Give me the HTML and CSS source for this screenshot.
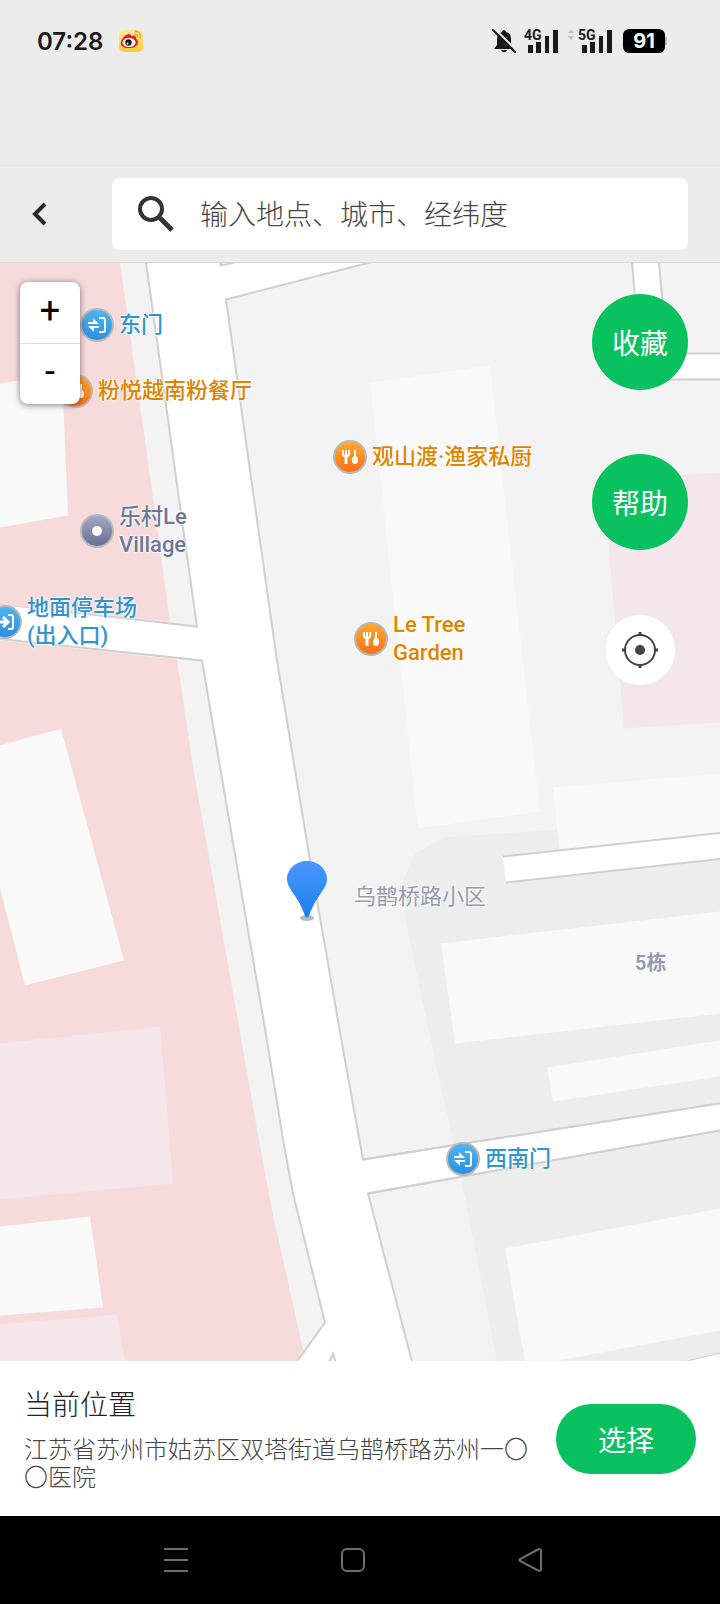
FILE: index.html
```
<!DOCTYPE html>
<html lang="zh-CN">
<head>
    <meta charset="UTF-8">
    <meta name="viewport" content="width=device-width, initial-scale=1.0">
    <title>选择位置</title>
    <link rel="stylesheet" href="styles.css">
</head>
<body>

    <!-- Phone status bar -->
    <div class="status-bar">
        <div class="status-row">
            <span class="clock">07:28</span>
            <svg class="weibo" width="26" height="24" viewBox="0 0 26 24">
                <defs>
                    <linearGradient id="weiboBg" x1="0" y1="0" x2="0" y2="1">
                        <stop offset="0" stop-color="#fbe9a4"/>
                        <stop offset="1" stop-color="#fbcb34"/>
                    </linearGradient>
                </defs>
                <rect x="1" y="1" width="24" height="22" rx="5" fill="url(#weiboBg)"/>
                <path d="M3 13c1-4 5-8 8-8 2 0 2 1 2 2 2-1 5-1 5 2 0 1 2 2 2 4 0 4-4 6-9 6s-9-2-8-6z" fill="#e2231a"/>
                <ellipse cx="11" cy="13.500" rx="6.500" ry="4.500" fill="#fff"/>
                <circle cx="10.500" cy="13.500" r="3.200" fill="#111"/>
                <circle cx="9.500" cy="14.500" r="1" fill="#fff"/>
                <path d="M17 2c4 0 6 3 5 7M17 5c2 0 3 1 2.500 3" fill="none" stroke="#eb9c28" stroke-width="1.300" stroke-linecap="round"/>
            </svg>
            <div class="status-icons">
                <svg width="24" height="24" viewBox="0 0 24 24">
                    <path d="M12 1c1 0 2 1 2 2 4 1 5 4 5 7v5l4 5H2l3-4v-6c0-3 2-6 5-7 0-1 1-2 2-2z" fill="#191919"/>
                    <path d="M9 21h6c-1 3-5 3-6 0z" fill="#191919"/>
                    <path d="M3 0l22 22" stroke="#ececec" stroke-width="2"/>
                    <path d="M1 1l22 22" stroke="#191919" stroke-width="2" stroke-linecap="round"/>
                </svg>
                <svg class="signal" width="36" height="26" viewBox="0 0 36 26">
                    <text x="0" y="12">4G</text>
                    <path d="M4 17h5v8h-5zM12 14h5v11h-5zM21 8h4v17h-4zM29 2h5v23h-5z"/>
                </svg>
                <svg class="signal signal-data" width="46" height="26" viewBox="0 0 46 26">
                    <path d="M0 5l3-4 3 4zM0 8l3 4 3-4z" fill="#bdbdbd"/>
                    <text x="10" y="12">5G</text>
                    <path d="M14 17h5v8h-5zM22 14h5v11h-5zM31 8h4v17h-4zM39 2h5v23h-5z"/>
                </svg>
                <span class="battery">91</span>
            </div>
        </div>
    </div>

    <!-- Search header -->
    <div class="header">
        <button class="back" aria-label="返回">
            <svg width="18" height="26" viewBox="0 0 18 26">
                <path d="M14 3L4 13l10 10" fill="none" stroke="#2b2b2b" stroke-width="4"/>
            </svg>
        </button>
        <form class="search">
            <svg width="36" height="36" viewBox="0 0 36 36">
                <circle cx="13" cy="13" r="11" fill="none" stroke="#333" stroke-width="4"/>
                <path d="M22 22l12 12" stroke="#333" stroke-width="5"/>
            </svg>
            <input type="text" aria-label="搜索" placeholder="输入地点、城市、经纬度">
        </form>
    </div>

    <!-- Map -->
    <div class="map">
        <svg class="tiles" viewBox="0 262 720 1099" preserveAspectRatio="xMidYMid slice">
            <!-- land blocks, the roads are the white gaps -->
            <g class="land">
                <path d="M-5 255H145L146 262 164 390 182 520 197 626-5 603z"/>
                <path d="M-5 638L202 660 236 860 267 1040 284 1145 293 1193 325 1322 297 1361 290 1370H-5z"/>
                <path d="M219 255L221 265 243 260z"/>
                <path d="M226 299L358 265 400 255H631L632 262 642 379H725V1102L363 1159 345 1060 310 860 277 660 250 470z"/>
                <path d="M658 255L659 262 667 353H725V255z"/>
                <path d="M368 1193L725 1129V1351L683 1361 650 1370H414L412 1361z"/>
                <path d="M327 1366L333 1353 337 1366z"/>
            </g>
            <g class="district">
                <path d="M0 262H120L145 440 170 621 0 604z"/>
                <path d="M0 640L177 659 192 760 245 1060 259 1140 272 1210 303 1349 296 1361H0z"/>
            </g>
            <g class="estate">
                <path d="M443 837L560 829 720 815V1103L454 1144 435 1060 405 917 402 883 415 853z"/>
                <path d="M461 1177L720 1131V1352L683 1361H497z"/>
            </g>
            <g class="building">
                <path d="M0 383L62 373 68 515 0 527z"/>
                <path d="M0 745L61 728 124 960 25 985 0 888z"/>
                <path d="M0 1226L90 1216 103 1307 0 1315z"/>
                <path d="M370 382L490 365 540 811 418 828z"/>
                <path d="M553 787L720 773V840L560 856z"/>
                <path d="M441 943L720 911V1013L455 1043z"/>
                <path d="M547 1067L720 1040V1076L553 1101z"/>
                <path d="M505 1248L720 1208V1330L553 1361H525z"/>
            </g>
            <g class="ward">
                <path d="M0 1043L160 1026 173 1183 0 1199z"/>
                <path d="M0 1324L117 1314 125 1361H0z"/>
                <path d="M603 480L720 472V722L624 728z"/>
            </g>
            <path d="M503 856L725 832V858L506 882z" fill="#fff"/>
            <path class="kerb" d="M503 856L725 832M506 882L725 858M363 1159L725 1102M368 1193L725 1129"/>
        </svg>

        <!-- Shared marker drawings -->
        <svg class="symbols" width="0" height="0">
            <defs>
                <linearGradient id="blue" x1="0" y1="0" x2="0" y2="1">
                    <stop offset="0" stop-color="#4db5f2"/>
                    <stop offset="1" stop-color="#2e8fe0"/>
                </linearGradient>
                <linearGradient id="orange" x1="0" y1="0" x2="0" y2="1">
                    <stop offset="0" stop-color="#ffa92c"/>
                    <stop offset="1" stop-color="#f9701a"/>
                </linearGradient>
                <linearGradient id="slate" x1="0" y1="0" x2="0" y2="1">
                    <stop offset="0" stop-color="#a3a8c2"/>
                    <stop offset="1" stop-color="#666f92"/>
                </linearGradient>
                <symbol id="gate" viewBox="0 0 36 36">
                    <circle cx="18" cy="18" r="17" fill="#b9b9b9"/>
                    <circle cx="18" cy="18" r="15" fill="url(#blue)"/>
                    <path d="M20 11h4q2 0 2 2v10q0 2-2 2h-4" fill="none" stroke="#fff" stroke-width="2"/>
                    <path d="M9 17h11l-6-6v4H9zM20 19H9l6 6v-4h5z" fill="#fff"/>
                </symbol>
                <symbol id="entry" viewBox="0 0 36 36">
                    <circle cx="18" cy="18" r="17" fill="#b9b9b9"/>
                    <circle cx="18" cy="18" r="15" fill="url(#blue)"/>
                    <path d="M21 11h3q2 0 2 2v10q0 2-2 2h-3" fill="none" stroke="#fff" stroke-width="2"/>
                    <path d="M10 18h10M16 13l5 5-5 5" fill="none" stroke="#fff" stroke-width="3"/>
                </symbol>
                <symbol id="food" viewBox="0 0 36 36">
                    <circle cx="18" cy="18" r="17" fill="#b9b9b9"/>
                    <circle cx="18" cy="18" r="15" fill="url(#orange)"/>
                    <path d="M11 11v4q0 2 3 2t3-2v-4M14 11v14" fill="none" stroke="#fff" stroke-width="2"/>
                    <path d="M14 17v8" stroke="#fff" stroke-width="3"/>
                    <path d="M23 11v8" stroke="#fff" stroke-width="2"/>
                    <ellipse cx="23" cy="21" rx="3" ry="4" fill="#fff"/>
                </symbol>
                <symbol id="place" viewBox="0 0 36 36">
                    <circle cx="18" cy="18" r="17" fill="#b9b9b9"/>
                    <circle cx="18" cy="18" r="15" fill="url(#slate)"/>
                    <circle cx="18" cy="18" r="5" fill="#fff"/>
                </symbol>
            </defs>
        </svg>

        <div class="poi poi-blue east-gate">
            <svg><use href="#gate"/></svg><span>东门</span>
        </div>
        <div class="poi poi-orange pho">
            <svg><use href="#food"/></svg><span>粉悦越南粉餐厅</span>
        </div>
        <div class="poi poi-slate village">
            <svg><use href="#place"/></svg><span>乐村Le<br>Village</span>
        </div>
        <div class="poi poi-blue parking">
            <svg><use href="#entry"/></svg><span>地面停车场<br>(出入口)</span>
        </div>
        <div class="poi poi-orange kitchen">
            <svg><use href="#food"/></svg><span>观山渡·渔家私厨</span>
        </div>
        <div class="poi poi-orange le-tree">
            <svg><use href="#food"/></svg><span>Le Tree<br>Garden</span>
        </div>
        <div class="poi poi-blue southwest-gate">
            <svg><use href="#gate"/></svg><span>西南门</span>
        </div>
        <div class="poi poi-area community"><span>乌鹊桥路小区</span></div>
        <div class="poi poi-area block-five"><span>5栋</span></div>

        <svg class="pin" width="42" height="62" viewBox="0 0 42 62">
            <defs>
                <linearGradient id="pinFill" x1="0" y1="0" x2="0" y2="1">
                    <stop offset="0" stop-color="#4c97ff"/>
                    <stop offset="1" stop-color="#1a7fe8"/>
                </linearGradient>
            </defs>
            <ellipse cx="21" cy="58" rx="7" ry="3" fill="#b5b5bd"/>
            <path d="M21 1C10 1 1 9 1 19c0 6 4 11 8 17 5 7 8 14 10 20q2 3 4 0c2-6 5-13 10-20 4-6 8-11 8-17C41 9 32 1 21 1z" fill="url(#pinFill)"/>
        </svg>

        <div class="zoom">
            <button aria-label="放大">+</button>
            <button aria-label="缩小">-</button>
        </div>

        <div class="tools">
            <button class="round">收藏</button>
            <button class="round">帮助</button>
            <button class="locate" aria-label="定位">
                <svg width="38" height="38" viewBox="0 0 38 38">
                    <circle cx="19" cy="19" r="15" fill="none" stroke="#444" stroke-width="2"/>
                    <circle cx="19" cy="19" r="5" fill="#444"/>
                    <path d="M19 1v4M19 33v4M1 19h4M33 19h4" stroke="#444" stroke-width="3"/>
                </svg>
            </button>
        </div>
    </div>

    <!-- Selected place -->
    <div class="panel">
        <div class="place">
            <h1>当前位置</h1>
            <p>江苏省苏州市姑苏区双塔街道乌鹊桥路苏州一〇〇医院</p>
        </div>
        <button class="choose">选择</button>
    </div>

    <!-- Phone navigation bar -->
    <div class="nav-bar">
        <button aria-label="菜单">
            <svg width="26" height="26" viewBox="0 0 26 26"><path d="M1 2h24M1 13h24M1 24h24"/></svg>
        </button>
        <button aria-label="主页">
            <svg width="26" height="26" viewBox="0 0 26 26"><rect x="2" y="2" width="22" height="22" rx="5"/></svg>
        </button>
        <button aria-label="后退">
            <svg width="26" height="26" viewBox="0 0 26 26"><path d="M22 2L3 12q-1 1 0 2l19 10q2 0 2-2V4q0-2-2-2z"/></svg>
        </button>
    </div>

</body>
</html>
```
FILE: styles.css
```
* {
    margin: 0;
    padding: 0;
    box-sizing: border-box;
}

body {
    display: flex;
    flex-direction: column;
    min-height: 100vh;
    background: #fff;
    color: #222;
    font-family: Roboto, "Noto Sans CJK SC", sans-serif;
}

svg {
    display: block;
    flex-shrink: 0;
}

button {
    display: flex;
    align-items: center;
    justify-content: center;
    border: none;
    background: none;
    font-family: inherit;
    cursor: pointer;
}

/* Status bar */
.status-bar {
    height: 166px;
    background: #ececec;
    border-bottom: 1px solid #e4e4e4;
}

.status-row {
    display: flex;
    align-items: center;
    height: 82px;
    padding: 0 55px 0 37px;
}

.clock {
    font-family: Inter, sans-serif;
    font-size: 24px;
    font-weight: 600;
    color: #191919;
}

.weibo {
    margin-left: 15px;
}

.status-icons {
    display: flex;
    align-items: center;
    margin-left: auto;
}

.signal {
    margin-left: 8px;
    fill: #191919;
    font-family: Roboto, sans-serif;
    font-size: 14px;
    font-weight: 700;
}

.battery {
    position: relative;
    width: 42px;
    height: 24px;
    margin-left: 9px;
    border-radius: 6px;
    background: #000;
    color: #fff;
    font-family: Inter, sans-serif;
    font-size: 20px;
    font-weight: 700;
    line-height: 24px;
    text-align: center;
}

.battery::after {
    content: "";
    position: absolute;
    top: 8px;
    right: -2px;
    width: 2px;
    height: 8px;
    background: #b5b5b5;
}

/* Search header */
.header {
    display: flex;
    align-items: center;
    height: 97px;
    padding-right: 32px;
    background: #ececec;
    border-bottom: 1px solid #d9d9d9;
}

.back {
    width: 112px;
    height: 96px;
    padding-left: 31px;
    justify-content: flex-start;
}

.search {
    display: flex;
    flex: 1;
    align-items: center;
    height: 72px;
    padding: 0 26px;
    border-radius: 8px;
    background: #fff;
}

.search input {
    flex: 1;
    min-width: 0;
    margin-left: 26px;
    padding-top: 3px;
    border: none;
    outline: none;
    background: none;
    font-family: inherit;
    font-size: 28px;
    font-weight: 300;
}

.search input::placeholder {
    color: #444;
}

/* Map */
.map {
    position: relative;
    flex: 1;
    min-height: 900px;
    overflow: hidden;
}

.tiles {
    position: absolute;
    width: 100%;
    height: 100%;
}

.symbols {
    position: absolute;
}

.land {
    fill: #f3f3f3;
    stroke: #d0d0d0;
    stroke-width: 2;
}

.district {
    fill: #f7dada;
}

.estate {
    fill: #ededed;
}

.building {
    fill: #f9f9f9;
}

.ward {
    fill: #f5e6eb;
}

.kerb {
    stroke: #d0d0d0;
    stroke-width: 2;
}

.poi {
    position: absolute;
    display: flex;
    align-items: center;
    gap: 4px;
    font-size: 22px;
    font-weight: 500;
    line-height: 28px;
    white-space: nowrap;
    text-shadow: 0 0 2px #fff, 0 0 2px #fff, 0 0 3px #fff;
}

.poi svg {
    width: 36px;
    height: 36px;
}

.poi-blue {
    color: #2f94cf;
}

.poi-orange {
    color: #de8500;
}

.poi-slate {
    color: #6d7899;
}

.poi-area {
    color: #949bb0;
    font-weight: 400;
}

/* Marker places on the map */
.east-gate {
    left: 79px;
    top: 44px;
}

.pho {
    left: 58px;
    top: 110px;
}

.village {
    left: 79px;
    top: 240px;
}

.parking {
    left: -13px;
    top: 331px;
}

.kitchen {
    left: 332px;
    top: 176px;
}

.le-tree {
    left: 353px;
    top: 348px;
}

.southwest-gate {
    left: 445px;
    top: 878px;
}

.community {
    left: 354px;
    top: 620px;
}

.block-five {
    left: 635px;
    top: 686px;
    font-size: 20px;
    font-weight: 700;
}

.pin {
    position: absolute;
    left: 286px;
    top: 597px;
}

.zoom {
    position: absolute;
    left: 20px;
    top: 19px;
    width: 60px;
    border-radius: 8px;
    background: #fff;
    box-shadow: 0 1px 6px rgba(0, 0, 0, 0.5);
}

.zoom button {
    width: 60px;
    height: 61px;
    padding-bottom: 4px;
    color: #000;
    font-size: 36px;
}

.zoom button + button {
    border-top: 1px solid #ddd;
}

.tools {
    position: absolute;
    top: 31px;
    right: 32px;
    display: flex;
    flex-direction: column;
    align-items: center;
    gap: 64px;
}

.round {
    width: 96px;
    height: 96px;
    border-radius: 50%;
    background: #0ac160;
    color: #fff;
    font-size: 28px;
}

.locate {
    width: 72px;
    height: 72px;
    border: 1px solid #ececec;
    border-radius: 50%;
    background: #fff;
}

/* Selected place */
.panel {
    display: flex;
    align-items: center;
    gap: 24px;
    padding: 25px 24px 24px;
    background: #fff;
}

.place {
    flex: 1;
}

.place h1 {
    font-size: 28px;
    font-weight: 300;
    line-height: 40px;
}

.place p {
    margin-top: 10px;
    color: #444;
    font-size: 24px;
    font-weight: 300;
    line-height: 28px;
}

.choose {
    width: 140px;
    height: 70px;
    border-radius: 35px;
    background: #0ac160;
    color: #fff;
    font-size: 28px;
}

/* Navigation bar */
.nav-bar {
    display: flex;
    align-items: center;
    justify-content: center;
    gap: 151px;
    height: 88px;
    padding-right: 15px;
    background: #000;
}

.nav-bar svg {
    fill: none;
    stroke: #6e6e6e;
    stroke-width: 2;
}
```
